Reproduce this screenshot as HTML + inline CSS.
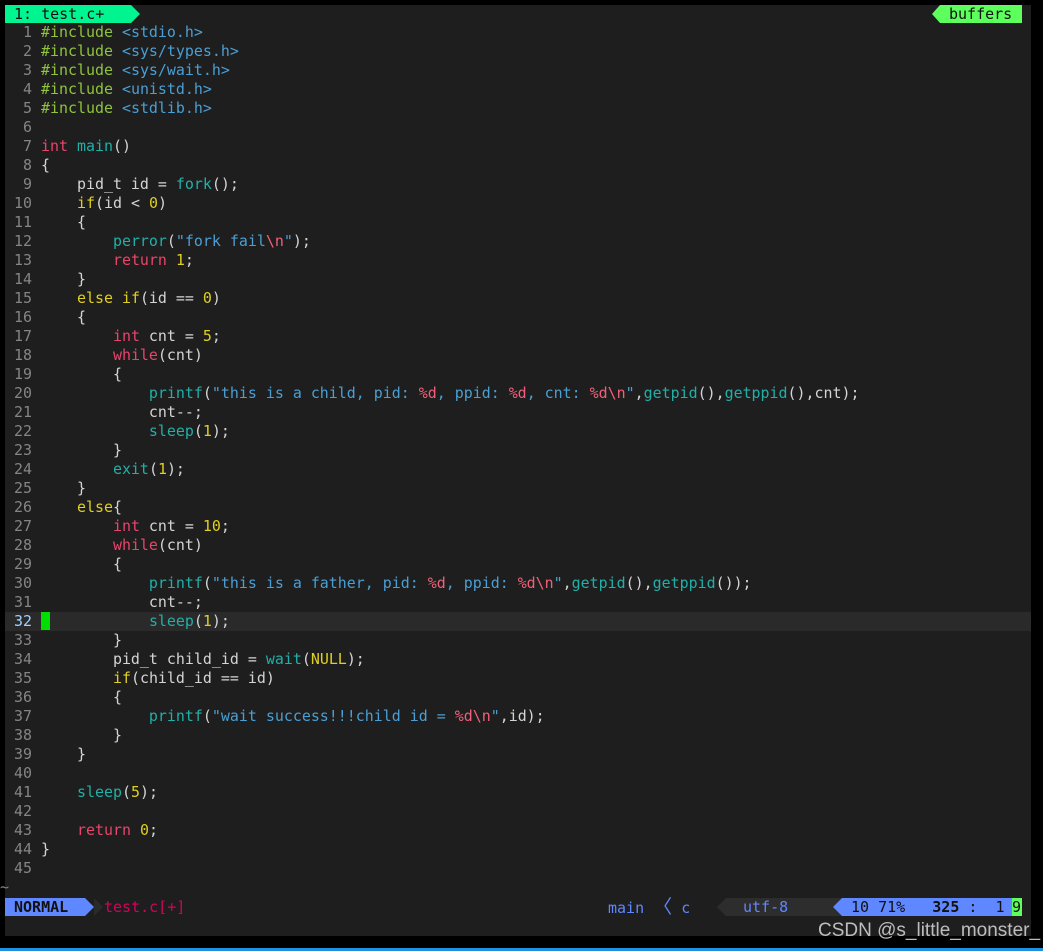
<!DOCTYPE html>
<html><head><meta charset="utf-8"><style>
html,body{margin:0;padding:0;background:#000;width:1043px;height:951px;overflow:hidden;position:relative}
#ed{position:absolute;left:5px;top:5px;width:1026px;height:931px;background:#1e1e1e}
.mono{font-family:"DejaVu Sans Mono","Liberation Mono",monospace;font-size:15px;white-space:pre}
#code{position:absolute;left:5px;top:23px;width:1026px;white-space:normal;font-size:14.95px}
.l{height:19px;line-height:19px;position:relative;white-space:pre}
.n{display:inline-block;width:27px;text-align:right;color:#858585;margin-right:9px}
.cur{background:#2a2a2a}
.cur .n{color:#9fd0ff}
.p{color:#8fc43c}.s{color:#4a9fd4}.k{color:#e8456b}.f{color:#20b0a8}.y{color:#e0d020}.e{color:#f0607a}.t{color:#d4d4d4}
</style></head><body>
<div id="ed"></div>
<div class="mono" style="position:absolute;left:5px;top:5px;height:18px;line-height:18px;width:126px;background:#00f590;color:#111;padding-left:9px;box-sizing:border-box">1: test.c+</div>
<div style="position:absolute;left:131px;top:5px;width:0;height:0;border-top:9px solid transparent;border-bottom:9px solid transparent;border-left:9px solid #00f590"></div>
<div style="position:absolute;left:932px;top:5px;width:0;height:0;border-top:9px solid transparent;border-bottom:9px solid transparent;border-right:8px solid #5cff5c"></div>
<div class="mono" style="position:absolute;left:940px;top:5px;height:18px;line-height:18px;width:82px;background:#5cff5c;color:#111;padding-left:9px;box-sizing:border-box">buffers</div>
<div id="code" class="mono t"><div class="l"><span class="n">1</span><span class="p">#include</span> <span class="s">&lt;stdio.h&gt;</span></div><div class="l"><span class="n">2</span><span class="p">#include</span> <span class="s">&lt;sys/types.h&gt;</span></div><div class="l"><span class="n">3</span><span class="p">#include</span> <span class="s">&lt;sys/wait.h&gt;</span></div><div class="l"><span class="n">4</span><span class="p">#include</span> <span class="s">&lt;unistd.h&gt;</span></div><div class="l"><span class="n">5</span><span class="p">#include</span> <span class="s">&lt;stdlib.h&gt;</span></div><div class="l"><span class="n">6</span></div><div class="l"><span class="n">7</span><span class="k">int</span> <span class="f">main</span>()</div><div class="l"><span class="n">8</span>{</div><div class="l"><span class="n">9</span>    pid_t id = <span class="f">fork</span>();</div><div class="l"><span class="n">10</span>    <span class="y">if</span>(id &lt; <span class="y">0</span>)</div><div class="l"><span class="n">11</span>    {</div><div class="l"><span class="n">12</span>        <span class="f">perror</span>(<span class="s">"fork fail</span><span class="e">\n</span><span class="s">"</span>);</div><div class="l"><span class="n">13</span>        <span class="k">return</span> <span class="y">1</span>;</div><div class="l"><span class="n">14</span>    }</div><div class="l"><span class="n">15</span>    <span class="y">else if</span>(id == <span class="y">0</span>)</div><div class="l"><span class="n">16</span>    {</div><div class="l"><span class="n">17</span>        <span class="k">int</span> cnt = <span class="y">5</span>;</div><div class="l"><span class="n">18</span>        <span class="k">while</span>(cnt)</div><div class="l"><span class="n">19</span>        {</div><div class="l"><span class="n">20</span>            <span class="f">printf</span>(<span class="s">"this is a child, pid: </span><span class="e">%d</span><span class="s">, ppid: </span><span class="e">%d</span><span class="s">, cnt: </span><span class="e">%d\n</span><span class="s">"</span>,<span class="f">getpid</span>(),<span class="f">getppid</span>(),cnt);</div><div class="l"><span class="n">21</span>            cnt--;</div><div class="l"><span class="n">22</span>            <span class="f">sleep</span>(<span class="y">1</span>);</div><div class="l"><span class="n">23</span>        }</div><div class="l"><span class="n">24</span>        <span class="f">exit</span>(<span class="y">1</span>);</div><div class="l"><span class="n">25</span>    }</div><div class="l"><span class="n">26</span>    <span class="y">else</span>{</div><div class="l"><span class="n">27</span>        <span class="k">int</span> cnt = <span class="y">10</span>;</div><div class="l"><span class="n">28</span>        <span class="k">while</span>(cnt)</div><div class="l"><span class="n">29</span>        {</div><div class="l"><span class="n">30</span>            <span class="f">printf</span>(<span class="s">"this is a father, pid: </span><span class="e">%d</span><span class="s">, ppid: </span><span class="e">%d\n</span><span class="s">"</span>,<span class="f">getpid</span>(),<span class="f">getppid</span>());</div><div class="l"><span class="n">31</span>            cnt--;</div><div class="l cur"><span class="n">32</span><span style="background:#00e000"> </span>           <span class="f">sleep</span>(<span class="y">1</span>);</div><div class="l"><span class="n">33</span>        }</div><div class="l"><span class="n">34</span>        pid_t child_id = <span class="f">wait</span>(<span class="y">NULL</span>);</div><div class="l"><span class="n">35</span>        <span class="y">if</span>(child_id == id)</div><div class="l"><span class="n">36</span>        {</div><div class="l"><span class="n">37</span>            <span class="f">printf</span>(<span class="s">"wait success!!!child id = </span><span class="e">%d\n</span><span class="s">"</span>,id);</div><div class="l"><span class="n">38</span>        }</div><div class="l"><span class="n">39</span>    }</div><div class="l"><span class="n">40</span></div><div class="l"><span class="n">41</span>    <span class="f">sleep</span>(<span class="y">5</span>);</div><div class="l"><span class="n">42</span></div><div class="l"><span class="n">43</span>    <span class="k">return</span> <span class="y">0</span>;</div><div class="l"><span class="n">44</span>}</div><div class="l"><span class="n">45</span></div><div class="l" style="color:#858585;margin-left:-5px">~</div></div>
<div class="mono" style="position:absolute;left:5px;top:898px;height:18px;line-height:18px;width:80px;background:#5f87ff;color:#111;font-weight:bold;padding-left:9px;box-sizing:border-box">NORMAL</div>
<div style="position:absolute;left:85px;top:898px;border-top:9px solid transparent;border-bottom:9px solid transparent;border-left:9px solid #5f87ff"></div>
<div style="position:absolute;left:94px;top:898px;border-top:9px solid transparent;border-bottom:9px solid transparent;border-left:9px solid #2a2a2a"></div>
<div class="mono" style="position:absolute;left:104px;top:898px;line-height:18px;color:#d7005f">test.c[+]</div>
<div class="mono" style="position:absolute;left:608px;top:898px;line-height:18px;color:#5f87ff">main <span style="font-size:19px">〈</span> c</div>
<div style="position:absolute;left:717px;top:898px;border-top:9px solid transparent;border-bottom:9px solid transparent;border-right:9px solid #2d2d2d"></div>
<div class="mono" style="position:absolute;left:726px;top:898px;height:18px;line-height:18px;width:116px;background:#2d2d2d;color:#5f87ff;padding-left:17px;box-sizing:border-box">utf-8</div>
<div style="position:absolute;left:833px;top:898px;border-top:9px solid transparent;border-bottom:9px solid transparent;border-right:9px solid #5f87ff"></div>
<div class="mono" style="position:absolute;left:842px;top:898px;height:18px;line-height:18px;width:170px;background:#5f87ff;color:#111;padding-left:9px;box-sizing:border-box">10 71%   <b>325</b> :  1</div>
<div class="mono" style="position:absolute;left:1012px;top:898px;height:18px;line-height:18px;width:10px;background:#5cff5c;color:#111">9</div>
<div style="position:absolute;left:0;top:948px;width:1043px;height:3px;background:#1e90e0"></div>
<div style="position:absolute;left:818px;top:920px;font-family:'Liberation Sans',sans-serif;font-size:19px;color:#bdbdbd;white-space:nowrap">CSDN @s_little_monster_</div>
</body></html>
